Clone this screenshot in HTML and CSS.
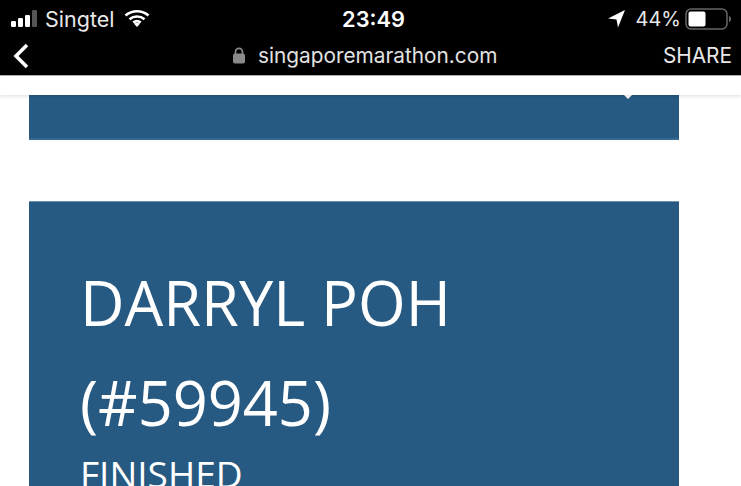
FILE: index.html
```html
<!DOCTYPE html>
<html lang="en">
<head>
<meta charset="utf-8">
<title>singaporemarathon.com</title>
<link rel="stylesheet" href="styles.css">
</head>
<body>
<header class="chrome">
  <div class="status">
    <div class="status-left">
      <svg class="signal" width="28" height="18" viewBox="0 0 28 18"><rect x="0" y="11" width="5" height="6" rx="1.2" fill="#fff"/><rect x="7" y="8" width="5" height="9" rx="1.2" fill="#fff"/><rect x="14" y="5" width="5" height="12" rx="1.2" fill="#fff"/><rect x="21" y="0" width="5" height="17" rx="1.2" fill="#555"/></svg>
      <span class="carrier">Singtel</span>
      <svg class="wifi" width="26" height="18" viewBox="0 0 26 18"><path d="M1.5 6.5C8 .8 18 .8 24.5 6.500M5.500 10.200c4.300-3.600 10.700-3.600 15 0M9.300 13.600c2.200-1.700 5.200-1.700 7.400 0" fill="none" stroke="#fff" stroke-width="2.700"/><path d="M13 18l-3-3.300c1.800-1.200 4.200-1.200 6 0z" fill="#fff"/></svg>
    </div>
    <div class="time">23:49</div>
    <div class="status-right">
      <svg class="arrow" width="18" height="18" viewBox="0 0 18 18"><path d="M17 0L0 8.500l8.500 1 1.500 8z" fill="#fff"/></svg>
      <span class="pct">44%</span>
      <svg class="battery" width="47" height="22" viewBox="0 0 47 22"><rect x="1" y="1" width="41" height="20" rx="5" fill="none" stroke="#666" stroke-width="1.500"/><rect x="3.500" y="3.500" width="17" height="15" rx="2" fill="#fff"/><path d="M44 8c1.500.5 2 1.500 2 3s-.5 2.500-2 3z" fill="#666"/></svg>
    </div>
  </div>
  <div class="address">
    <svg class="back" width="18" height="26" viewBox="0 0 18 26"><path d="M15 2L4 13l11 11" fill="none" stroke="#fff" stroke-width="3.600"/></svg>
    <div class="url">
      <svg class="lock" width="14" height="17" viewBox="0 0 14 17"><path d="M3.500 7V4.800a3.500 3.500 0 0 1 7 0V7" fill="none" stroke="#8a8a8a" stroke-width="1.700"/><rect x="1" y="6.500" width="12" height="10" rx="2" fill="#8a8a8a"/></svg>
      <span>singaporemarathon.com</span>
    </div>
    <span class="share">SHARE</span>
  </div>
</header>
<div class="topstrip"></div>
<main class="page">
  <section class="card card-prev"></section>
  <section class="card card-result">
    <h1 class="name">DARRYL POH<br>(#59945)</h1>
    <p class="state">FINISHED</p>
  </section>
</main>
</body>
</html>
```
FILE: styles.css
```css
* { box-sizing: border-box; }
html, body { margin: 0; padding: 0; height: 486px; overflow: hidden; background: #fff; }
body { font-family: "Inter", "Liberation Sans", sans-serif; color: #fff; }

.chrome { background: #000; height: 76px; border-bottom: 1px solid #b5b5b5; }
.status { height: 38px; display: grid; grid-template-columns: 1fr auto 1fr; align-items: center; padding: 0 9px 0 11px; }
.status-left { display: flex; align-items: center; }
.signal { margin-right: 6px; }
.carrier { font-size: 21.5px; color: #e8e8e8; }
.wifi { margin-left: 10px; margin-top: -3px; }
.time { font-size: 21.8px; font-weight: 600; margin-left: 4px; }
.status-right { display: flex; align-items: center; justify-content: flex-end; }
.arrow { margin-right: 10px; }
.pct { font-size: 20px; color: #e8e8e8; margin-right: 4px; }

.address { height: 37px; display: flex; align-items: center; padding: 0 9px 2px 12px; }
.url { display: flex; align-items: center; gap: 12px; margin-left: 202px; font-size: 20.8px; color: #e2e2e2; }
.share { margin-left: auto; font-size: 20.8px; color: #e8e8e8; }

.topstrip { height: 19px; background: #fff; box-shadow: 0 1px 4px rgba(0,0,0,.14); position: relative; z-index: 1; }

.page { padding-left: 29px; width: 679px; }
.card { background: #275a82; }
.card-prev { height: 45px; border-bottom: 2px solid #366a92; position: relative; }
.card-prev::after { content: ""; position: absolute; left: 595px; top: 0; border: 4px solid transparent; border-top-color: #fff; border-bottom-width: 0; }
.card-result { margin-top: 61px; height: 330px; padding: 50px 0 0 51px; border-top: 1px solid #6f93ad; }
.name { margin: 0; font-family: "Open Sans", "Noto Sans", sans-serif; font-weight: 400; font-size: 61.3px; line-height: 100px; }
.state { margin: 0; font-family: "Open Sans", "Noto Sans", sans-serif; font-size: 37px; line-height: 44px; }
```
